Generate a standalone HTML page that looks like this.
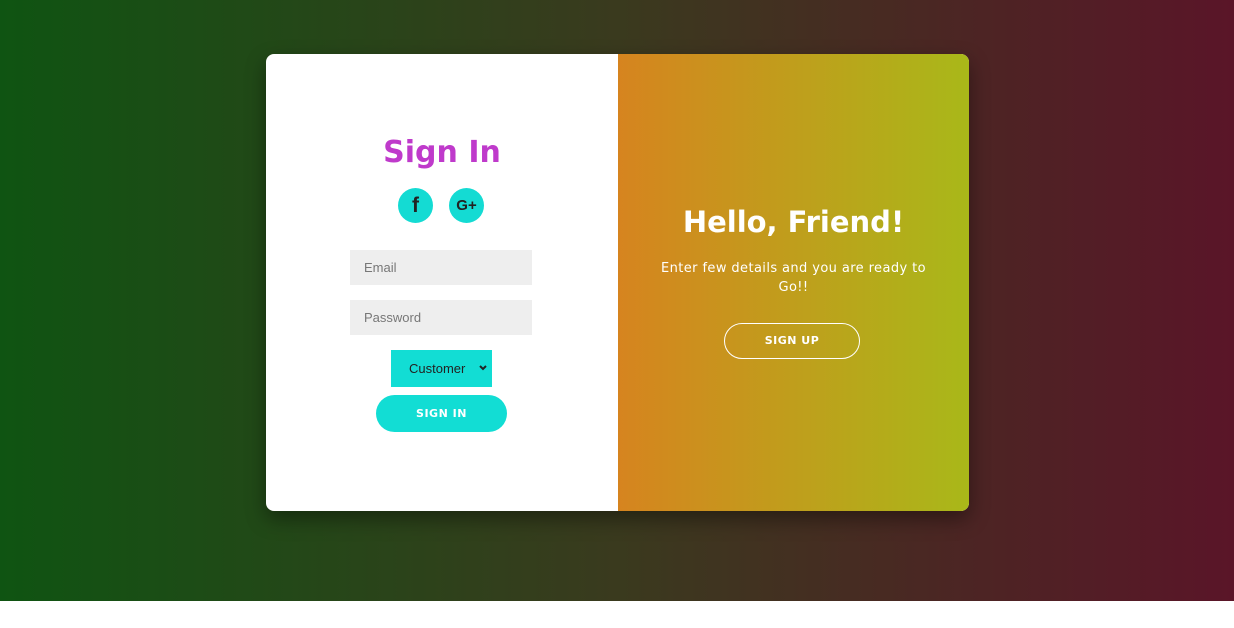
<!DOCTYPE html>
<html><head><style>
body{margin:0;width:1234px;height:628px;background:#fff;position:relative;overflow:hidden;font-family:"DejaVu Sans",sans-serif}
.bg{position:absolute;left:0;top:0;width:1234px;height:601px;background:linear-gradient(to right,#0f5412,#3a3a1e 50%,#5a1528)}
.card{position:absolute;left:266px;top:54px;width:703px;height:457px;border-radius:8px;overflow:hidden;box-shadow:0 8px 20px rgba(0,0,0,.4);background:#fff}
.right{position:absolute;left:352px;top:0;width:351px;height:457px;background:linear-gradient(to right,#d6841f,#a9b819);color:#fff;text-align:center}
h1{position:absolute;margin:0;font-weight:bold}
.in{position:absolute;left:84px;width:182px;height:35px;background:#eee;font:13px "Liberation Sans",sans-serif;color:#777;line-height:35px;box-sizing:border-box;padding-left:14px}
.soc{position:absolute;top:134px;width:35px;height:35px;border-radius:50%;background:#14dbd3;color:#222;text-align:center;line-height:35px;font:bold 18px "Liberation Sans",sans-serif}
</style></head><body>
<div class="bg"></div>
<div class="card">
<h1 style="left:0;width:352px;text-align:center;top:81px;font-size:30px;color:#bf3acb">Sign In</h1>
<div class="soc" style="left:132px;line-height:35px;font-size:21px">f</div>
<div class="soc" style="left:183px;line-height:35px;font-size:15px">G+</div>
<div class="in" style="top:196px">Email</div>
<div class="in" style="top:246px">Password</div>
<div style="position:absolute;left:125px;top:296px;width:101px;height:37px;background:#12ddd4;font:13px 'Liberation Sans',sans-serif;color:#222;line-height:37px;box-sizing:border-box;padding-left:18px">Customer<svg style="position:absolute;right:5px;top:15px" width="8" height="6" viewBox="0 0 8 6"><path d="M1 1L4 4L7 1" stroke="#222" stroke-width="2" fill="none"/></svg></div>
<div style="position:absolute;left:110px;top:341px;width:131px;height:37px;border-radius:19px;background:#12ddd4;color:#fff;font:bold 11px 'DejaVu Sans',sans-serif;letter-spacing:.5px;text-align:center;line-height:37px">SIGN IN</div>
<div class="right">
<h1 style="left:0;width:351px;top:151px;font-size:29px">Hello, Friend!</h1>
<div style="position:absolute;left:30px;width:291px;top:205px;font-size:13px;line-height:19px;letter-spacing:.4px">Enter few details and you are ready to Go!!</div>
<div style="position:absolute;left:106px;top:269px;width:134px;height:34px;border:1px solid #fff;border-radius:18px;font-weight:bold;font-size:11px;letter-spacing:.5px;line-height:34px">SIGN UP</div>
</div>
</div>
</body></html>
